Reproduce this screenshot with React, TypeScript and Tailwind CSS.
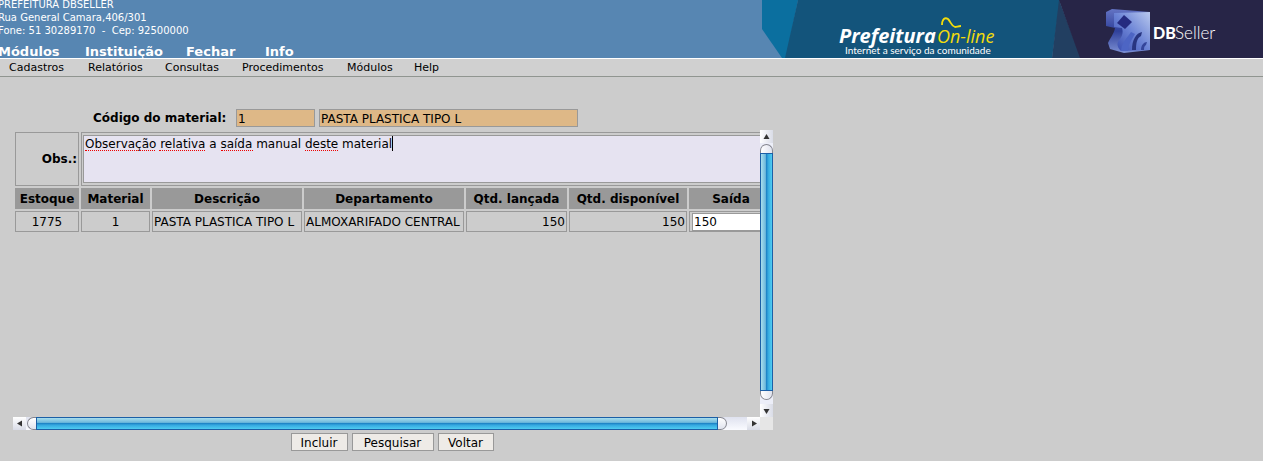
import React, { useState } from "react";

const mainMenu = [
  { label: "Módulos", width: "w-[87px]" },
  { label: "Instituição", width: "w-[101px]" },
  { label: "Fechar", width: "w-[79px]" },
  { label: "Info", width: "w-[60px]" },
];

const subMenu = [
  { label: "Cadastros", width: "w-[79px]" },
  { label: "Relatórios", width: "w-[77px]" },
  { label: "Consultas", width: "w-[77px]" },
  { label: "Procedimentos", width: "w-[105px]" },
  { label: "Módulos", width: "w-[67px]" },
  { label: "Help", width: "w-[40px]" },
];

const columns = ["Estoque", "Material", "Descrição", "Departamento", "Qtd. lançada", "Qtd. disponível", "Saída"];

const header = "bg-[#999999] p-0 text-center font-bold";
const cell = "border border-[#999999] px-px py-0 whitespace-nowrap";
const field = "h-[18px] border border-[#999999] px-px pt-px";
const button = "h-[18px] border border-[#999999] bg-[#eeebe7] pt-px leading-4";

function Banner() {
  return (
    <svg width="501" height="58" viewBox="0 0 501 58" className="block shrink-0" role="img" aria-label="Prefeitura On-line DBSeller">
      <defs>
        <linearGradient id="face" x1="0" y1="1" x2="1" y2="0">
          <stop offset="0" stopColor="#3549ad" />
          <stop offset="0.5" stopColor="#6c84d6" />
          <stop offset="1" stopColor="#b9c9ee" />
        </linearGradient>
        <linearGradient id="side" x1="0" y1="0" x2="0" y2="1">
          <stop offset="0" stopColor="#6474c4" />
          <stop offset="0.5" stopColor="#2f409a" />
          <stop offset="1" stopColor="#7c90d4" />
        </linearGradient>
      </defs>
      <path d="M0 0H36L24 58H20L0 29Z" fill="#0b6f9f" />
      <path d="M36 0H298L290 58H23Z" fill="#13547b" />
      <path d="M297 0L290 58H319Z" fill="#223f61" />
      <path d="M297 0H501V58H318Z" fill="#272547" />
      <text x="77" y="43" fill="#fff" fontFamily="'Open Sans', sans-serif" fontSize="20" fontWeight="700" fontStyle="italic">Prefeitura</text>
      <text x="175" y="43" fill="#f3dc0b" fontFamily="'Open Sans', sans-serif" fontSize="18" fontStyle="italic">On-line</text>
      <path d="M180 25C180 19 183 17 186 19C189 22 189 26 193 27C195 27 196 26 199 26" fill="none" stroke="#f3dc0b" strokeWidth="1.8" />
      <text x="83" y="54" fill="#fff" fontFamily="Lato, sans-serif" fontSize="10">Internet a serviço da comunidade</text>
      <path d="M344 12L350 9L388 12V50L362 53L348 49L346 43C348 38 352 34 353 28L344 26Z" fill="url(#side)" />
      <path d="M352 13L388 12V50L359 51C354 46 355 42 358 39C361 35 361 31 360 28L352 27Z" fill="url(#face)" />
      <path d="M355 23L362 15L370 22L363 29Z" fill="#252b80" />
      <path d="M359 51C360 42 365 38 369 32L373 34C369 41 366 45 366 51Z" fill="#4d65c4" />
      <path d="M370 50C370 40 374 33 380 32L379 36C375 38 374 43 374 50Z" fill="#283580" />
      <path d="M379 50C379 45 382 42 385 42L384 45C382 46 382 48 382 50Z" fill="#34459a" />
      <text x="391" y="39" fill="#fff" fontFamily="Lato, sans-serif" fontSize="16" fontWeight="900">DB</text>
      <text x="413" y="39" fill="#fff" fontFamily="Lato, sans-serif" fontSize="17" fontWeight="300">Seller</text>
    </svg>
  );
}

function Arrow({ path }: { path: string }) {
  return (
    <svg width="13" height="13" viewBox="0 0 13 13" className="block" aria-hidden="true">
      <path d={path} fill="#333" />
    </svg>
  );
}

function VerticalScrollbar() {
  return (
    <div className="flex w-[13px] shrink-0 flex-col bg-[#eceef8]">
      <button type="button" aria-label="Rolar para cima" className="h-[13px] bg-linear-to-r from-white to-[#d9dce7]">
        <Arrow path="M6.5 4L9.5 9H3.5Z" />
      </button>
      <div className="flex flex-1 flex-col">
        <div className="mt-px h-[9px] rounded-t-full border border-b-0 border-[#85868f] bg-linear-to-r from-white to-[#e0e3ee]" />
        <div className="flex-1 border border-[#1c5fa6] bg-[linear-gradient(to_right,#a8deed,#6fb9dc_40%,#1f86c8_50%,#35a9e0_65%,#4fcdf2)]" />
        <div className="h-[9px] rounded-b-full border border-t-0 border-[#85868f] bg-linear-to-r from-white to-[#e0e3ee]" />
        <div className="h-1" />
      </div>
      <button type="button" aria-label="Rolar para baixo" className="h-[13px] bg-linear-to-r from-white to-[#d9dce7]">
        <Arrow path="M6.5 10L9.5 5H3.5Z" />
      </button>
    </div>
  );
}

function HorizontalScrollbar() {
  return (
    <div className="flex h-[13px]">
      <div className="flex flex-1 bg-linear-to-b from-[#dfe2ef] to-[#fafbff]">
        <button type="button" aria-label="Rolar para a esquerda" className="w-[13px] bg-linear-to-b from-white to-[#d9dce7]">
          <Arrow path="M4 6.5L9 3.5V9.5Z" />
        </button>
        <div className="ml-px w-[9px] rounded-l-full border border-r-0 border-[#85868f] bg-linear-to-b from-white to-[#e0e3ee]" />
        <div className="flex-1 border border-[#1c5fa6] bg-[linear-gradient(to_bottom,#a8deed,#6fb9dc_40%,#1f86c8_50%,#35a9e0_65%,#4fcdf2)]" />
        <div className="mr-5 w-[9px] rounded-r-full border border-l-0 border-[#85868f] bg-linear-to-b from-white to-[#e0e3ee]" />
        <button type="button" aria-label="Rolar para a direita" className="w-[13px] bg-linear-to-b from-white to-[#d9dce7]">
          <Arrow path="M10 6.5L5 3.5V9.5Z" />
        </button>
      </div>
      <div className="w-[13px] bg-[#e6e6e6]" />
    </div>
  );
}

function SpellMarks() {
  const mark = "h-px border-b border-dotted border-[#ee0000]";
  return (
    <div aria-hidden="true" className="pointer-events-none absolute top-px left-[2px] flex h-[15px] items-end">
      <span className={mark + " w-[70px]"} />
      <span className={mark + " ml-1 w-[46px]"} />
      <span className={mark + " ml-4 w-8"} />
      <span className={mark + " ml-[52px] w-[33px]"} />
      <span className="ml-[54px] h-[15px] w-px bg-black" />
    </div>
  );
}

export default function App() {
  const [note, setNote] = useState("Observação relativa a saída manual deste material");
  const [amount, setAmount] = useState("150");

  return (
    <div className="min-h-screen overflow-hidden bg-[#cccccc] font-['DejaVu_Sans',sans-serif] text-[12px] text-black">
      <header className="flex h-[58px] justify-between overflow-hidden bg-[#5786b2] text-white">
        <div className="-ml-0.5 flex flex-col">
          <address className="-mt-0.5 text-[10px] leading-[13px] whitespace-pre not-italic">
            PREFEITURA DBSELLER<br />
            Rua General Camara,406/301<br />
            {"Fone: 51 30289170  -  Cep: 92500000"}
          </address>
          <nav className="mt-[7px] flex text-[13px] leading-4 font-bold">
            {mainMenu.map((item) => (
              <a key={item.label} href="#" className={item.width}>{item.label}</a>
            ))}
          </nav>
        </div>
        <Banner />
      </header>
      <nav className="flex h-[19px] border-t border-b border-t-white border-b-[#909590] bg-[#d0d0d0] pl-[9px] text-[11px] leading-[17px]">
        {subMenu.map((item) => (
          <a key={item.label} href="#" className={item.width}>{item.label}</a>
        ))}
      </nav>

      <form className="ml-[13px] max-w-[760px] pt-8" onSubmit={(e) => e.preventDefault()}>
        <div className="flex items-center gap-1 pl-20">
          <label htmlFor="code" className="w-[139px] font-bold">Código do material:</label>
          <input id="code" readOnly value="1" className={field + " w-[79px] bg-[#deb887]"} />
          <input aria-label="Descrição do material" readOnly value="PASTA PLASTICA TIPO L" className={field + " w-[259px] bg-[#deb887]"} />
        </div>

        <div className="mt-[3px]">
          <div className="flex h-[287px]">
            <div className="min-w-0 flex-1 overflow-hidden">
              <table className="w-[762px] table-fixed border-separate border-spacing-[2px]">
                <colgroup>
                  <col className="w-[64px]" />
                  <col className="w-[69px]" />
                  <col className="w-[150px]" />
                  <col className="w-[160px]" />
                  <col className="w-[101px]" />
                  <col className="w-[118px]" />
                  <col className="w-[84px]" />
                </colgroup>
                <tbody>
                  <tr className="h-[54px]">
                    <th className={cell + " text-right font-bold"}>
                      <label htmlFor="note">Obs.:</label>
                    </th>
                    <td colSpan={6} className={cell}>
                      <div className="relative">
                        <textarea
                          id="note"
                          spellCheck={false}
                          value={note}
                          onChange={(e) => setNote(e.target.value)}
                          className="block h-12 w-full resize-none border border-[#999999] bg-[#e6e3f1] px-px pt-px leading-[15px] outline-none"
                        />
                        <SpellMarks />
                      </div>
                    </td>
                  </tr>
                  <tr className="h-[21px]">
                    {columns.map((name) => (
                      <th key={name} scope="col" className={header}>{name}</th>
                    ))}
                  </tr>
                  <tr className="h-[21px]">
                    <td className={cell + " text-center"}>1775</td>
                    <td className={cell + " text-center"}>1</td>
                    <td className={cell}>PASTA PLASTICA TIPO L</td>
                    <td className={cell}>ALMOXARIFADO CENTRAL</td>
                    <td className={cell + " text-right"}>150</td>
                    <td className={cell + " text-right"}>150</td>
                    <td className={cell}>
                      <input
                        aria-label="Saída"
                        value={amount}
                        onChange={(e) => setAmount(e.target.value)}
                        className={field + " mx-px block w-[78px] bg-white"}
                      />
                    </td>
                  </tr>
                </tbody>
              </table>
            </div>
            <VerticalScrollbar />
          </div>
          <HorizontalScrollbar />
        </div>

        <div className="mt-[3px] flex justify-center gap-1 pr-0.5">
          <button type="submit" className={button + " w-[57px]"}>Incluir</button>
          <button type="button" className={button + " w-[82px]"}>Pesquisar</button>
          <button type="button" className={button + " w-[56px]"}>Voltar</button>
        </div>
      </form>
    </div>
  );
}
